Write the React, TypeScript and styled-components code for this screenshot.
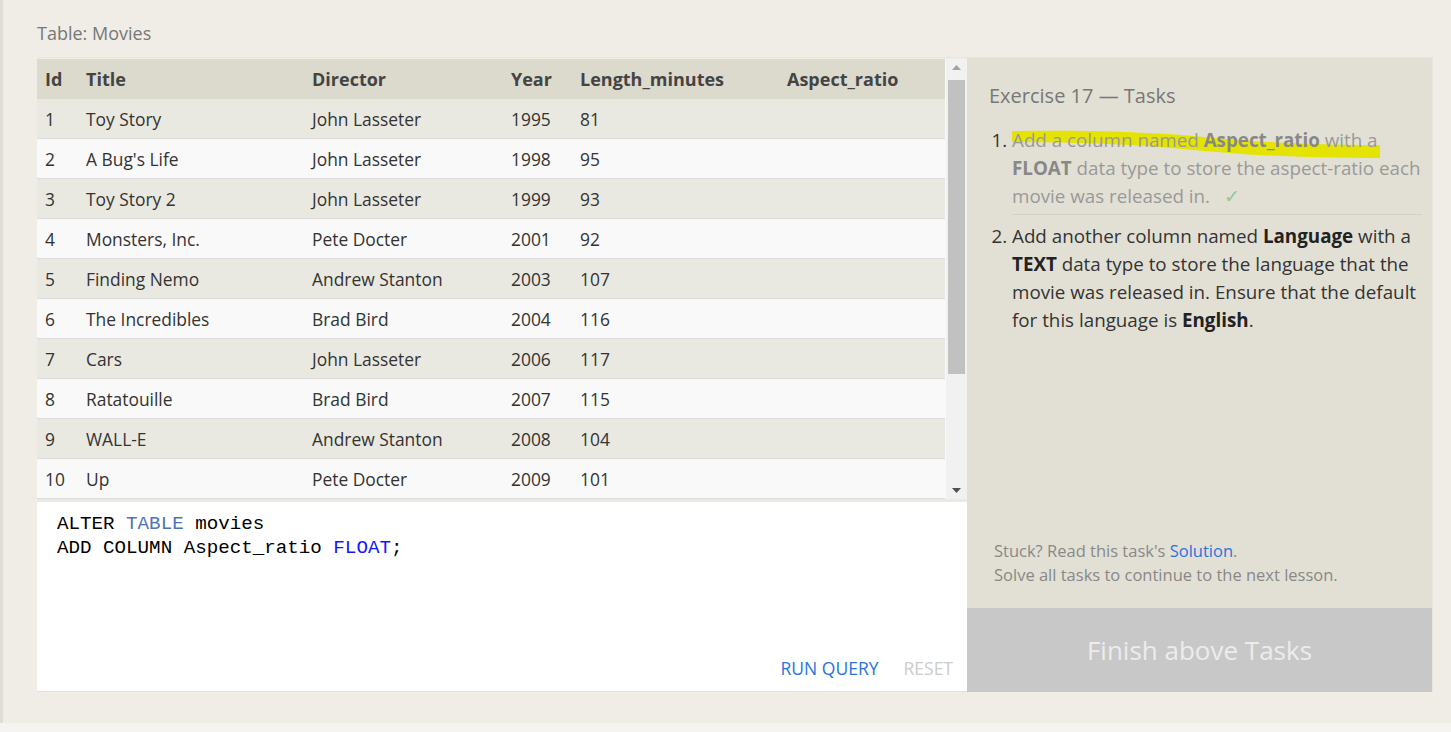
import React from "react";
import styled, { createGlobalStyle } from "styled-components";

const GlobalStyle = createGlobalStyle`
  html, body {
    margin: 0;
    padding: 0;
    background: #f5f4f0;
    font-family: "Open Sans", "Noto Sans", sans-serif;
  }
`;

const movies = [
  [1, "Toy Story", "John Lasseter", 1995, 81],
  [2, "A Bug's Life", "John Lasseter", 1998, 95],
  [3, "Toy Story 2", "John Lasseter", 1999, 93],
  [4, "Monsters, Inc.", "Pete Docter", 2001, 92],
  [5, "Finding Nemo", "Andrew Stanton", 2003, 107],
  [6, "The Incredibles", "Brad Bird", 2004, 116],
  [7, "Cars", "John Lasseter", 2006, 117],
  [8, "Ratatouille", "Brad Bird", 2007, 115],
  [9, "WALL-E", "Andrew Stanton", 2008, 104],
  [10, "Up", "Pete Docter", 2009, 101],
  [11, "Toy Story 3", "Lee Unkrich", 2010, 103],
  [12, "Cars 2", "John Lasseter", 2011, 120],
  [13, "Brave", "Brenda Chapman", 2012, 102],
  [14, "Monsters University", "Dan Scanlon", 2013, 110],
];

const columns = [
  { name: "Id", width: 41 },
  { name: "Title", width: 226 },
  { name: "Director", width: 199 },
  { name: "Year", width: 69 },
  { name: "Length_minutes", width: 207 },
  { name: "Aspect_ratio", width: 166 },
];

const Page = styled.div`
  height: 723px;
  box-sizing: border-box;
  border-left: 3px solid #dfdbd7;
  background: #efede6;
  padding: 20px 18px 0 34px;
`;

const TableLabel = styled.div`
  font-size: 18px;
  line-height: 26px;
  color: #777;
  margin-bottom: 11px;
`;

const Workspace = styled.div`
  display: flex;
  height: 634px;
  border-top: 1px solid #e7e5dd;
`;

const LeftColumn = styled.div`
  width: 930px;
  display: flex;
  flex-direction: column;
`;

const TableFrame = styled.div`
  height: 440px;
  margin-top: 1px;
  display: flex;
  background: #f9f9f9;
  flex-shrink: 0;
`;

const ScrollArea = styled.div`
  flex: 1;
  overflow: hidden;
`;

const Table = styled.table`
  width: 908px;
  border-collapse: collapse;
  table-layout: fixed;
  color: #333;
`;

const HeadCell = styled.th`
  height: 40px;
  padding: 0 0 0 8px;
  text-align: left;
  background: #dbdacd;
  font-size: 18px;
  font-weight: 700;
  color: #444;
`;

const Row = styled.tr<{ $odd: boolean }>`
  background: ${(p) => (p.$odd ? "#eae9e1" : "#f9f9f9")};
  border-bottom: 1px solid #dcdcdb;
`;

const Cell = styled.td`
  height: 39px;
  padding: 0 0 0 8px;
  font-size: 17.4px;
  white-space: nowrap;
  overflow: hidden;
`;

const ScrollRail = styled.div`
  width: 21px;
  background: #f1f1f1;
  display: flex;
  flex-direction: column;
  align-items: center;
`;

const ScrollArrow = styled.div`
  height: 17px;
  width: 100%;
  display: flex;
  align-items: center;
  justify-content: center;
`;

const ScrollTrack = styled.div`
  flex: 1;
  width: 100%;
  position: relative;
`;

const ScrollThumb = styled.div`
  position: absolute;
  left: 2px;
  right: 2px;
  background: #c1c1c1;
`;

const Editor = styled.div`
  flex: 1;
  background: #fff;
  border-top: 3px solid #ebe9e2;
  border-bottom: 1px solid #e4e2d9;
  display: flex;
  flex-direction: column;
  padding: 10px 14px 11px 20px;
`;

const Code = styled.pre`
  margin: 0;
  flex: 1;
  font-family: "Liberation Mono", "DejaVu Sans Mono", monospace;
  font-size: 19.2px;
  line-height: 24px;
  color: #000;
`;

const Keyword = styled.span<{ $tone: "table" | "type" }>`
  color: ${(p) => (p.$tone === "table" ? "#4f72b8" : "#1515ff")};
`;

const EditorActions = styled.div`
  display: flex;
  justify-content: flex-end;
  gap: 25px;
`;

const ActionButton = styled.button<{ $disabled?: boolean }>`
  border: 0;
  background: none;
  padding: 0;
  font-family: inherit;
  font-size: 17.5px;
  line-height: 24px;
  color: ${(p) => (p.$disabled ? "#cccccc" : "#2a74dc")};
  cursor: pointer;
`;

const TaskPanel = styled.div`
  width: 465px;
  display: flex;
  flex-direction: column;
  background: #e2e0d5;
  border-right: 1px solid #e7e5dd;
`;

const TaskBody = styled.div`
  flex: 1;
  padding: 24px 10px 0 22px;
  display: flex;
  flex-direction: column;
`;

const TaskTitle = styled.div`
  font-size: 20px;
  line-height: 28px;
  color: #777;
  margin-bottom: 16px;
`;

const TaskList = styled.ol`
  margin: 0;
  padding: 0 0 0 23px;
  font-size: 18.8px;
  line-height: 28px;
  color: #333;
`;

const TaskItem = styled.li<{ $done?: boolean }>`
  position: relative;
  padding: ${(p) => (p.$done ? "0 0 4px" : "7px 0 0")};
  border-bottom: ${(p) => (p.$done ? "1px solid #d3d1c6" : "none")};
  & > span {
    position: relative;
    color: ${(p) => (p.$done ? "#999" : "#333")};
  }
  & b {
    color: ${(p) => (p.$done ? "#888" : "#222")};
  }
`;

const Check = styled.span`
  color: #8fca8f;
  margin-left: 14px;
`;

const Highlight = styled.svg`
  position: absolute;
  left: 0;
  top: -5px;
  pointer-events: none;
`;

const Hints = styled.div`
  margin-top: auto;
  padding: 0 0 21px 5px;
  font-size: 16.5px;
  line-height: 24px;
  color: #888;
`;

const SolutionLink = styled.a`
  color: #2a74dc;
  text-decoration: none;
`;

const FinishButton = styled.div`
  height: 84px;
  background: #c8c8c8;
  color: #ececec;
  font-size: 26px;
  display: flex;
  align-items: center;
  justify-content: center;
`;

function Triangle({ up }: { up: boolean }) {
  return (
    <svg width="9" height="5" viewBox="0 0 9 5">
      <path d={up ? "M0 5 L4.5 0 L9 5 Z" : "M0 0 L9 0 L4.5 5 Z"} fill={up ? "#a3a3a3" : "#505050"} />
    </svg>
  );
}

export default function App() {
  return (
    <>
      <GlobalStyle />
      <Page>
        <TableLabel>Table: Movies</TableLabel>
        <Workspace>
          <LeftColumn>
            <TableFrame>
              <ScrollArea>
                <Table>
                  <colgroup>
                    {columns.map((c) => (
                      <col key={c.name} style={{ width: c.width }} />
                    ))}
                  </colgroup>
                  <thead>
                    <tr>
                      {columns.map((c) => (
                        <HeadCell key={c.name}>{c.name}</HeadCell>
                      ))}
                    </tr>
                  </thead>
                  <tbody>
                    {movies.map((m, i) => (
                      <Row key={m[0]} $odd={i % 2 === 0}>
                        {m.map((v, j) => (
                          <Cell key={j}>{v}</Cell>
                        ))}
                        <Cell />
                      </Row>
                    ))}
                  </tbody>
                </Table>
              </ScrollArea>
              <ScrollRail>
                <ScrollArrow>
                  <Triangle up />
                </ScrollArrow>
                <ScrollTrack>
                  <ScrollThumb style={{ top: 4, height: 294 }} />
                </ScrollTrack>
                <ScrollArrow>
                  <Triangle up={false} />
                </ScrollArrow>
              </ScrollRail>
            </TableFrame>
            <Editor>
              <Code>
                ALTER <Keyword $tone="table">TABLE</Keyword> movies
                {"\n"}ADD COLUMN Aspect_ratio <Keyword $tone="type">FLOAT</Keyword>;
              </Code>
              <EditorActions>
                <ActionButton>RUN QUERY</ActionButton>
                <ActionButton $disabled>RESET</ActionButton>
              </EditorActions>
            </Editor>
          </LeftColumn>
          <TaskPanel>
            <TaskBody>
              <TaskTitle>Exercise 17 — Tasks</TaskTitle>
              <TaskList>
                <TaskItem $done>
                  <Highlight width="372" height="44" viewBox="0 0 372 44">
                    <path
                      d="M0 10 C 60 9, 120 10, 170 14 C 230 20, 290 24, 368 24 L 368 37 C 290 37, 230 34, 170 28 C 120 23, 60 21, 0 21 Z"
                      fill="#e5e400"
                    />
                  </Highlight>
                  <span>
                    Add a column named <b>Aspect_ratio</b> with a <b>FLOAT</b> data type to store the
                    aspect-ratio each movie was released in.
                    <Check>✓</Check>
                  </span>
                </TaskItem>
                <TaskItem>
                  <span>
                    Add another column named <b>Language</b> with a <b>TEXT</b> data type to store the
                    language that the movie was released in. Ensure that the default for this
                    language is <b>English</b>.
                  </span>
                </TaskItem>
              </TaskList>
              <Hints>
                Stuck? Read this task's <SolutionLink href="#">Solution</SolutionLink>.
                <br />
                Solve all tasks to continue to the next lesson.
              </Hints>
            </TaskBody>
            <FinishButton>Finish above Tasks</FinishButton>
          </TaskPanel>
        </Workspace>
      </Page>
    </>
  );
}
